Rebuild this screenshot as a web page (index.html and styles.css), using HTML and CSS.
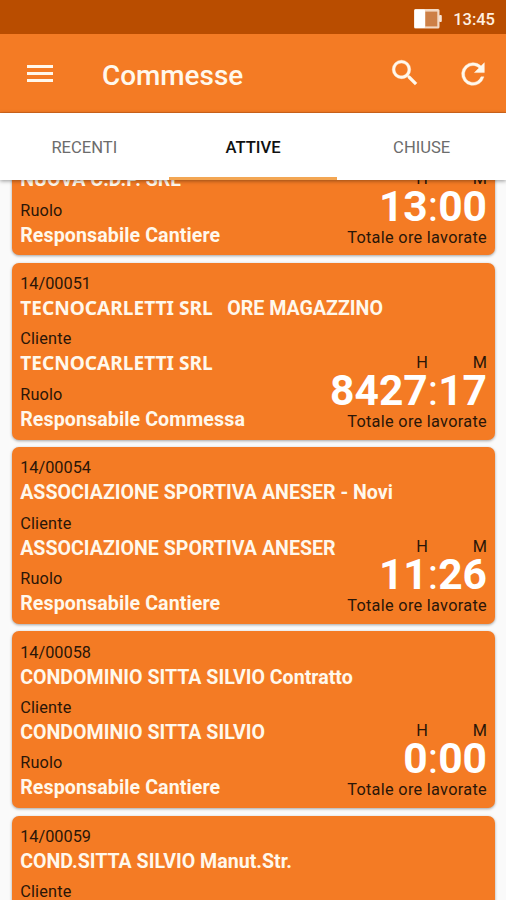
FILE: index.html
```html
<!DOCTYPE html>
<html lang="it">
<head>
<meta charset="utf-8">
<title>Commesse</title>
<link rel="stylesheet" href="styles.css">
</head>
<body>
<div class="screen">
  <div class="status">
    <svg class="battery" width="28" height="20" viewBox="0 0 28 20"><rect x="0" y="0" width="25.5" height="19.5" rx="1.5" fill="#f3d9c4"/><rect x="0.5" y="0.5" width="10.5" height="18.5" rx="1" fill="#fff"/><rect x="11.3" y="2.6" width="12" height="14.8" fill="#cd8047"/><rect x="25" y="6" width="2.8" height="7" rx="1" fill="#f8e4d4"/></svg>
    <span class="time">13:45</span>
  </div>
  <header class="bar">
    <svg class="menu" width="26" height="18" viewBox="0 0 26 18" fill="#fff8ec"><rect y="0" width="26" height="3"/><rect y="7" width="26" height="3"/><rect y="14" width="26" height="3"/></svg>
    <h1 class="title">Commesse</h1>
    <svg class="search" width="34" height="34" viewBox="0 0 24 24" fill="#fff8ec" stroke="#fff8ec" stroke-width="0.3"><path d="M15.5 14h-.79l-.28-.27A6.47 6.47 0 0 0 16 9.5 6.5 6.5 0 1 0 9.5 16c1.61 0 3.09-.59 4.23-1.57l.27.28v.79l5 4.99L20.49 19l-4.99-5zm-6 0C7.01 14 5 11.99 5 9.5S7.01 5 9.5 5 14 7.01 14 9.5 11.99 14 9.5 14z"/></svg>
    <svg class="refresh" width="34" height="34" viewBox="0 0 24 24" fill="#fff8ec" stroke="#fff8ec" stroke-width="0.3"><path d="M17.65 6.35A7.96 7.96 0 0 0 12 4a8 8 0 1 0 7.73 10h-2.08A6 6 0 1 1 12 6c1.66 0 3.14.69 4.22 1.78L13 11h7V4l-2.35 2.35z"/></svg>
  </header>
  <nav class="tabs">
    <span class="tab">RECENTI</span>
    <span class="tab active">ATTIVE</span>
    <span class="tab">CHIUSE</span>
  </nav>
  <main class="view">
    <div class="list">
      <article class="card">
        <div class="row"><strong class="value">NUOVA C.D.P. SRL</strong></div>
        <div class="row"><span class="label">Ruolo</span><strong class="value role">Responsabile Cantiere</strong></div>
        <div class="hours"><div class="units"><span>H</span><span>M</span></div><div class="total">13<i>:</i>00</div><div class="caption">Totale ore lavorate</div></div>
      </article>
      <article class="card">
        <div class="row"><span class="label code">14/00051</span><strong class="value"><span class="noto">TECNOCARLETTI SRL</span>&nbsp;&nbsp; ORE MAGAZZINO</strong></div>
        <div class="row"><span class="label">Cliente</span><strong class="value"><span class="noto">TECNOCARLETTI SRL</span></strong></div>
        <div class="row"><span class="label">Ruolo</span><strong class="value role">Responsabile Commessa</strong></div>
        <div class="hours"><div class="units"><span>H</span><span>M</span></div><div class="total">8427<i>:</i>17</div><div class="caption">Totale ore lavorate</div></div>
      </article>
      <article class="card">
        <div class="row"><span class="label code">14/00054</span><strong class="value">ASSOCIAZIONE SPORTIVA ANESER - Novi</strong></div>
        <div class="row"><span class="label">Cliente</span><strong class="value">ASSOCIAZIONE SPORTIVA ANESER</strong></div>
        <div class="row"><span class="label">Ruolo</span><strong class="value role">Responsabile Cantiere</strong></div>
        <div class="hours"><div class="units"><span>H</span><span>M</span></div><div class="total">11<i>:</i>26</div><div class="caption">Totale ore lavorate</div></div>
      </article>
      <article class="card">
        <div class="row"><span class="label code">14/00058</span><strong class="value">CONDOMINIO SITTA SILVIO Contratto</strong></div>
        <div class="row"><span class="label">Cliente</span><strong class="value">CONDOMINIO SITTA SILVIO</strong></div>
        <div class="row"><span class="label">Ruolo</span><strong class="value role">Responsabile Cantiere</strong></div>
        <div class="hours"><div class="units"><span>H</span><span>M</span></div><div class="total">0<i>:</i>00</div><div class="caption">Totale ore lavorate</div></div>
      </article>
      <article class="card">
        <div class="row"><span class="label code">14/00059</span><strong class="value">COND.SITTA SILVIO Manut.Str.</strong></div>
        <div class="row"><span class="label">Cliente</span></div>
      </article>
    </div>
  </main>
</div>
</body>
</html>
```
FILE: styles.css
```css
* { box-sizing: border-box; }
body { margin: 0; font-family: Roboto, "Noto Sans", sans-serif; }
.screen { width: 506px; height: 900px; overflow: hidden; display: flex; flex-direction: column; background: #fafafa; }
.status { height: 34px; flex: none; background: #b94d00; display: flex; align-items: center; justify-content: flex-end; padding: 3px 11px 0 0; gap: 11.5px; }
.time { color: #fff0e0; font-size: 16.5px; font-weight: 500; line-height: 20px; padding-top: 2px; }
.bar { height: 79px; flex: none; background: #f47b24; border-bottom: 1px solid #dc6b1c; display: flex; align-items: center; padding: 2px 16px 0 27px; color: #fff8ec; }
.title { margin: 3px 0 0 49px; font-size: 27.9px; font-weight: 500; line-height: 34px; flex: 1; }
.search { margin-right: 34px; margin-top: -2px; }
.tabs { height: 67px; flex: none; display: flex; background: #fff; box-shadow: 0 1px 4px rgba(0,0,0,.4); position: relative; z-index: 1; }
.tab { flex: 1; display: flex; align-items: center; justify-content: center; font-size: 16.6px; color: #6c6c6c; border-bottom: 3px solid transparent; padding-top: 4px; }
.tab.active { color: #111; font-weight: 500; border-bottom-color: #f3a653; }
.view { flex: 1; min-height: 0; overflow: hidden; }
/* the list is scrolled so that its first card is partly hidden under the tabs */
.list { margin-top: -101.5px; padding: 0 11px 0 12px; display: flex; flex-direction: column; gap: 7.5px; }
.card { height: 176.8px; flex: none; position: relative; background: #f47b24; border-radius: 7px; box-shadow: 0 1px 3px rgba(0,0,0,.35); padding: 10.3px 8px 0 8.2px; display: flex; flex-direction: column; gap: 6.3px; }
.card:first-child { justify-content: flex-end; padding-bottom: 6.6px; }
.row { display: flex; flex-direction: column; }
.label { font-size: 16.3px; line-height: 22px; letter-spacing: .17px; color: #2a1608; }
.code { letter-spacing: 0; }
.value { font-size: 19.6px; line-height: 27px; height: 27px; color: #fff8ec; font-weight: 700; white-space: nowrap; }
.role { letter-spacing: .1px; }
.noto { font-family: "Noto Sans", sans-serif; font-size: 19.1px; line-height: 0; }
.hours { position: absolute; right: 8px; bottom: 7.8px; text-align: right; color: #2a1608; font-size: 16.3px; }
.units { display: flex; justify-content: flex-end; gap: 45px; line-height: 20px; }
.total { font-size: 42.6px; line-height: 34px; padding-bottom: 4px; font-weight: 700; color: #fff; }
.total i { font-style: normal; font-weight: 400; }
.caption { line-height: 21px; letter-spacing: .3px; }
```
